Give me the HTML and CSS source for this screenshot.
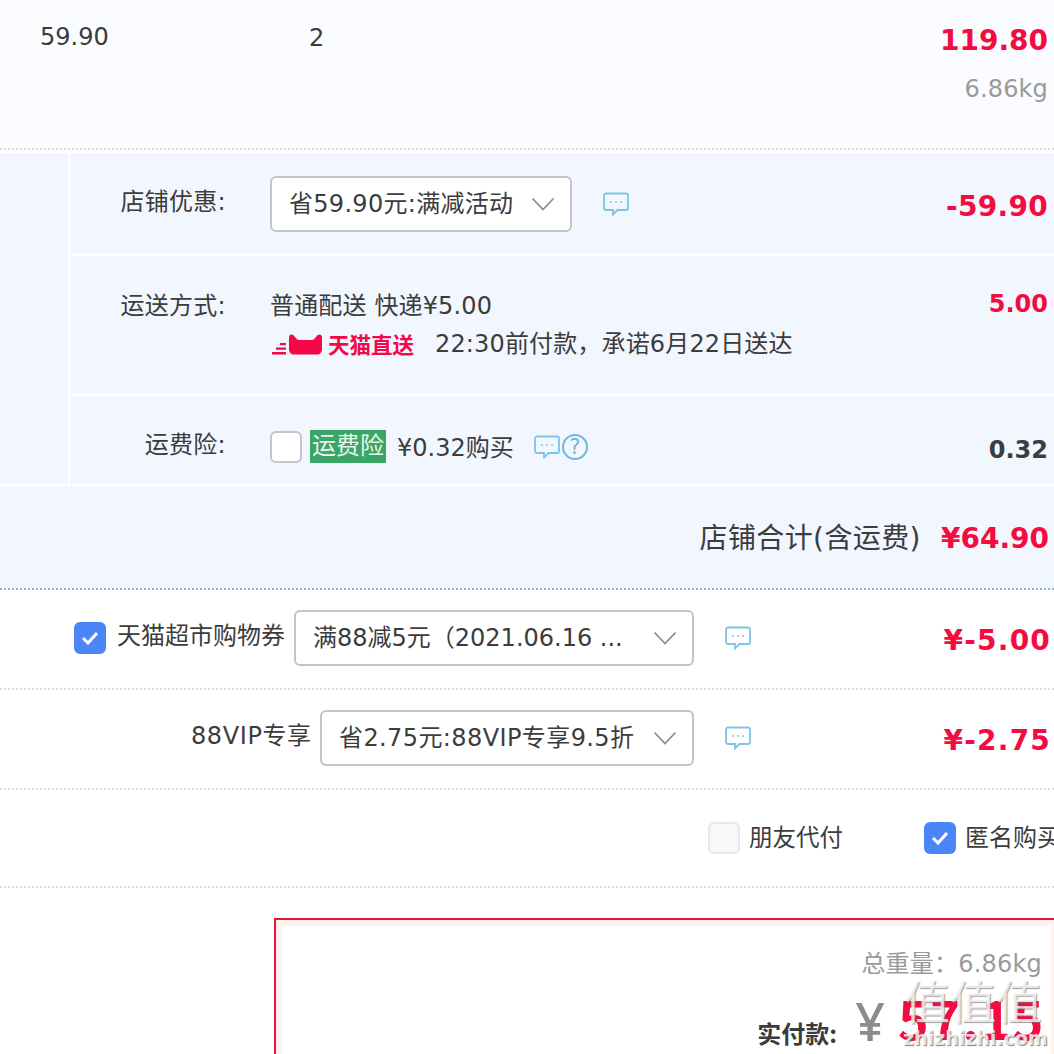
FILE: index.html
```html
<!DOCTYPE html>
<html lang="zh">
<head>
<meta charset="utf-8">
<title>确认订单</title>
<link rel="stylesheet" href="styles.css">
</head>
<body>
<svg class="defs" width="0" height="0" aria-hidden="true">
  <symbol id="chat" viewBox="0 0 26 24">
    <path d="M3 1.500h20a2 2 0 0 1 2 2v12.500a2 2 0 0 1-2 2h-8.500l-4.500 4.500v-4.500h-7a2 2 0 0 1-2-2v-12.500a2 2 0 0 1 2-2z" fill="none" stroke="#7cc4e8" stroke-width="1.800"/>
    <circle cx="8" cy="10" r="1" fill="#7cc4e8"/><circle cx="13" cy="10" r="1" fill="#7cc4e8"/><circle cx="18" cy="10" r="1" fill="#7cc4e8"/>
  </symbol>
  <symbol id="chev" viewBox="0 0 24 14">
    <path d="M1.500 1.500l10.500 11 10.500-11" fill="none" stroke="#8a8a8a" stroke-width="1.700"/>
  </symbol>
  <symbol id="tick" viewBox="0 0 16 14">
    <path d="M1 7l5 5 9-10" fill="none" stroke="#fff" stroke-width="3"/>
  </symbol>
</svg>

<section class="item">
  <div class="price">59.90</div>
  <div class="qty">2</div>
  <div class="sum">
    <div class="amount big">119.80</div>
    <div class="weight">6.86kg</div>
  </div>
</section>

<section class="shop">
  <div class="options">
    <div class="row row-promo">
      <div class="label">店铺优惠:</div>
      <div class="select s-shop"><span class="sel-text">省59.90元:满减活动</span><svg class="chev"><use href="#chev"/></svg></div>
      <svg class="chat"><use href="#chat"/></svg>
      <div class="amount big">-59.90</div>
    </div>
    <div class="row row-ship">
      <div class="label">运送方式:</div>
      <div class="ship">
        <div class="ship-line">普通配送 快递¥5.00</div>
        <div class="ship-line2">
          <span class="tmall">
            <svg class="tmall-logo" viewBox="0 0 50 21"><path d="M0 18h14v2.500h-14zM4 13.500h10v2.300h-10zM8 9h6v2.300h-6z" fill="#f4084a"/><path d="M19.500 .5C22.500 .5 24 6 27 6H40C43 6 44.500 .5 47.500 .5C49.500 .5 50 2 50 4V15C50 18.500 48 20.500 45 20.500H22C19 20.500 17 18.500 17 15V4C17 2 17.500 .5 19.500 .5z" fill="#f4084a"/></svg>
            <span class="tmall-text">天猫直送</span>
          </span>
          <span class="promise">22:30前付款&#xFF0C;承诺6月22日送达</span>
        </div>
      </div>
      <div class="amount small">5.00</div>
    </div>
    <div class="row row-ins">
      <div class="label">运费险:</div>
      <span class="check"></span>
      <span class="tag">运费险</span>
      <span class="ins-text">¥0.32购买</span>
      <svg class="chat chat-ins"><use href="#chat"/></svg>
      <span class="help">?</span>
      <div class="amount small dark">0.32</div>
    </div>
  </div>
  <div class="shop-total">
    <span class="total-label">店铺合计(含运费)</span>
    <span class="amount big">¥64.90</span>
  </div>
</section>

<section class="coupon coupon-tmall">
  <span class="check on"><svg class="tick"><use href="#tick"/></svg></span>
  <span class="coupon-name">天猫超市购物券</span>
  <div class="select s-coupon"><span class="sel-text">满88减5元&#xFF08;2021.06.16 ...</span><svg class="chev"><use href="#chev"/></svg></div>
  <svg class="chat"><use href="#chat"/></svg>
  <div class="amount big yen">¥-5.00</div>
</section>

<section class="coupon coupon-vip">
  <span class="coupon-name">88VIP专享</span>
  <div class="select s-vip"><span class="sel-text">省2.75元:88VIP专享9.5折</span><svg class="chev"><use href="#chev"/></svg></div>
  <svg class="chat"><use href="#chat"/></svg>
  <div class="amount big yen">¥-2.75</div>
</section>

<section class="pay-options">
  <span class="check off"></span><span class="opt-text">朋友代付</span>
  <span class="check on second"><svg class="tick"><use href="#tick"/></svg></span><span class="opt-text">匿名购买</span>
</section>

<section class="summary">
  <div class="box">
    <div class="total-weight">总重量&#xFF1A;6.86kg</div>
    <div class="pay-line">
      <span class="pay-label">实付款:</span>
      <span class="pay-yen">¥</span>
      <span class="pay-num">57.15</span>
    </div>
    <div class="watermark">
      <div class="wm-big">值值值</div>
      <div class="wm-small">zhizhizhi.com</div>
    </div>
  </div>
</section>
</body>
</html>
```
FILE: styles.css
```css
* { box-sizing: border-box; }
html, body { margin: 0; padding: 0; }
body {
  width: 1054px;
  height: 1054px;
  overflow: hidden;
  background: #fff;
  color: #3c3c3c;
  font-family: "DejaVu Sans", "Noto Sans CJK SC", sans-serif;
  font-size: 24px;
  line-height: 34px;
  letter-spacing: .3px;
}
.defs { position: absolute; }

.item {
  height: 150px;
  background: #fbfcff;
  border-bottom: 2px dotted #e0dccb;
  display: flex;
  align-items: flex-start;
}
.price { margin: 20px 0 0 40px; width: 269px; letter-spacing: 0; }
.qty { margin-top: 21px; }
.sum { margin-left: auto; padding: 24px 6px 0 0; text-align: right; }
.weight { margin-top: 14px; color: #9a9a9a; letter-spacing: .15px; }

.amount { font-weight: 700; color: #f40b3f; text-align: right; margin-left: auto; padding-right: 6px; white-space: nowrap; }
.sum .amount { padding-right: 0; letter-spacing: 0; }
.big { font-size: 28px; }
.small { font-size: 24px; letter-spacing: 0; }
.dark { color: #3c3c3c; }

.shop { margin-top: 3px; background: #f2f6fe; }
.options { margin-left: 68px; border-left: 2px solid #fff; }
.row { display: flex; align-items: center; border-bottom: 2px solid #fff; }
.row-promo { height: 103px; }
.row-promo .label { margin-top: -4px; }
.row-promo .amount { margin-top: 6px; }
.row-ship { height: 140px; align-items: flex-start; }
.row-ins { height: 88px; border-bottom: 0; padding-top: 12px; }
.label { width: 156px; margin-right: 44px; text-align: right; flex: none; }
.row-ship .label { margin-top: 33px; }
.row-ship .amount { margin-top: 31px; }
.row-ins .label { margin-top: -2px; }
.row-ins .amount { margin-top: 8px; }

.select {
  height: 56px;
  flex: none;
  display: flex;
  align-items: center;
  justify-content: space-between;
  padding: 0 15px 0 17px;
  background: #fff;
  border: 2px solid #c3c5cc;
  border-radius: 6px;
  white-space: nowrap;
}
.s-shop { width: 302px; }
.chev { width: 24px; height: 14px; flex: none; }
.chat { width: 26px; height: 24px; margin-left: 31px; flex: none; }

.ship { margin-top: 33px; }
.ship-line { letter-spacing: .15px; }
.ship-line2 { display: flex; align-items: center; margin-top: 4px; }
.tmall { display: flex; align-items: center; width: 165px; }
.tmall-logo { width: 50px; height: 21px; margin-left: 2px; flex: none; }
.tmall-text { margin-left: 6px; color: #f4084a; font-size: 21.500px; font-family: "Noto Sans CJK SC", sans-serif; font-weight: 700; letter-spacing: 0; }
.promise { letter-spacing: .15px; }

.check {
  width: 32px;
  height: 32px;
  flex: none;
  display: inline-flex;
  align-items: center;
  justify-content: center;
  background: #fff;
  border: 2px solid #c3c5cc;
  border-radius: 6px;
}
.check.on { background: #4a86f7; border-color: #4a86f7; }
.check.off { background: #f7f8fa; border-color: #e7e8ea; }
.tick { width: 16px; height: 14px; }
.row-ins .check { margin-top: 2px; }
.tag { margin-left: 8px; width: 76px; text-align: center; height: 33px; line-height: 33px; background: #3aa564; color: #e9f6ee; white-space: nowrap; letter-spacing: 0; }
.ins-text { margin-left: 11px; margin-top: 4px; letter-spacing: 0; }
.chat-ins { margin-left: 20px; margin-top: 2px; }
.help {
  width: 26px;
  height: 26px;
  margin-left: 2px;
  margin-top: 2px;
  border: 2px solid #6fb6e4;
  border-radius: 50%;
  color: #6fb6e4;
  font-size: 21px;
  line-height: 22px;
  text-align: center;
  letter-spacing: 0;
}

.shop-total {
  height: 104px;
  border-top: 2px solid #fff;
  display: flex;
  align-items: center;
  justify-content: flex-end;
  padding: 4px 5px 0 0;
}
.total-label { font-size: 28px; margin-right: 20px; letter-spacing: .4px; }
.shop-total .amount { margin-left: 0; padding-right: 0; letter-spacing: 0; }

.coupon { height: 100px; display: flex; align-items: center; border-bottom: 2px dotted #dcdcdc; padding-bottom: 2px; }
.coupon-tmall { border-top: 2px dotted #8fb4dc; height: 102px; }
.coupon-name { flex: none; margin-top: -4px; white-space: nowrap; }
.coupon-tmall .check { margin-left: 74px; }
.coupon-tmall .coupon-name { margin-left: 11px; width: 177px; letter-spacing: 0; }
.s-coupon { width: 400px; letter-spacing: 0; }
.coupon-vip .coupon-name { margin-left: 191px; width: 129px; letter-spacing: .6px; }
.s-vip { width: 374px; letter-spacing: .4px; }
.yen { padding-right: 3px; letter-spacing: 1.200px; margin-top: 6px; }

.pay-options {
  height: 98px;
  display: flex;
  align-items: center;
  border-bottom: 2px dotted #dcdcdc;
  white-space: nowrap;
  letter-spacing: 0;
}
.pay-options .check.off { margin-left: 708px; }
.pay-options .second { margin-left: 81px; }
.opt-text { margin-left: 9px; font-size: 23.500px; }
.second + .opt-text { font-size: 24px; }

.summary { padding: 30px 0 0 274px; width: 1054px; }
.box {
  position: relative;
  height: 136px;
  width: 785px;
  border: 2px solid #e4163f;
  border-bottom: 0;
  box-shadow: inset 6px 0 0 #fff1ec, inset -6px 0 0 #fff1ec, inset 0 6px 0 #fff1ec;
  padding: 27px 15px 0 0;
  text-align: right;
  letter-spacing: 0;
}
.total-weight { color: #9a9a9a; letter-spacing: .2px; }
.pay-line { display: flex; align-items: flex-end; justify-content: flex-end; margin-top: 7px; height: 60px; }
.pay-label { font-weight: 700; font-family: "Noto Sans CJK SC", sans-serif; margin-bottom: -2px; }
.pay-yen { font-size: 52px; font-weight: 500; color: #8c8c8c; margin-left: 18px; line-height: 60px; font-family: "Noto Sans", sans-serif; margin-bottom: -3px; }
.pay-num { font-size: 52px; font-weight: 700; color: #f40b3f; line-height: 60px; margin-left: 13px; margin-right: -3px; font-family: "Noto Sans CJK SC", sans-serif; letter-spacing: 1.500px; }

.watermark { position: absolute; left: 627px; top: 54px; width: 140px; text-align: center; }
.wm-big { font-size: 46px; line-height: 50px; color: rgba(255,255,255,.75); text-shadow: 1px 1px 1px rgba(120,120,120,.7); font-family: "Noto Sans CJK SC", sans-serif; white-space: nowrap; }
.wm-small { font-size: 19px; line-height: 22px; margin-top: 3px; color: rgba(255,255,255,.8); text-shadow: 1px 1px 1px rgba(100,100,100,.8); font-weight: 700; white-space: nowrap; }
```
